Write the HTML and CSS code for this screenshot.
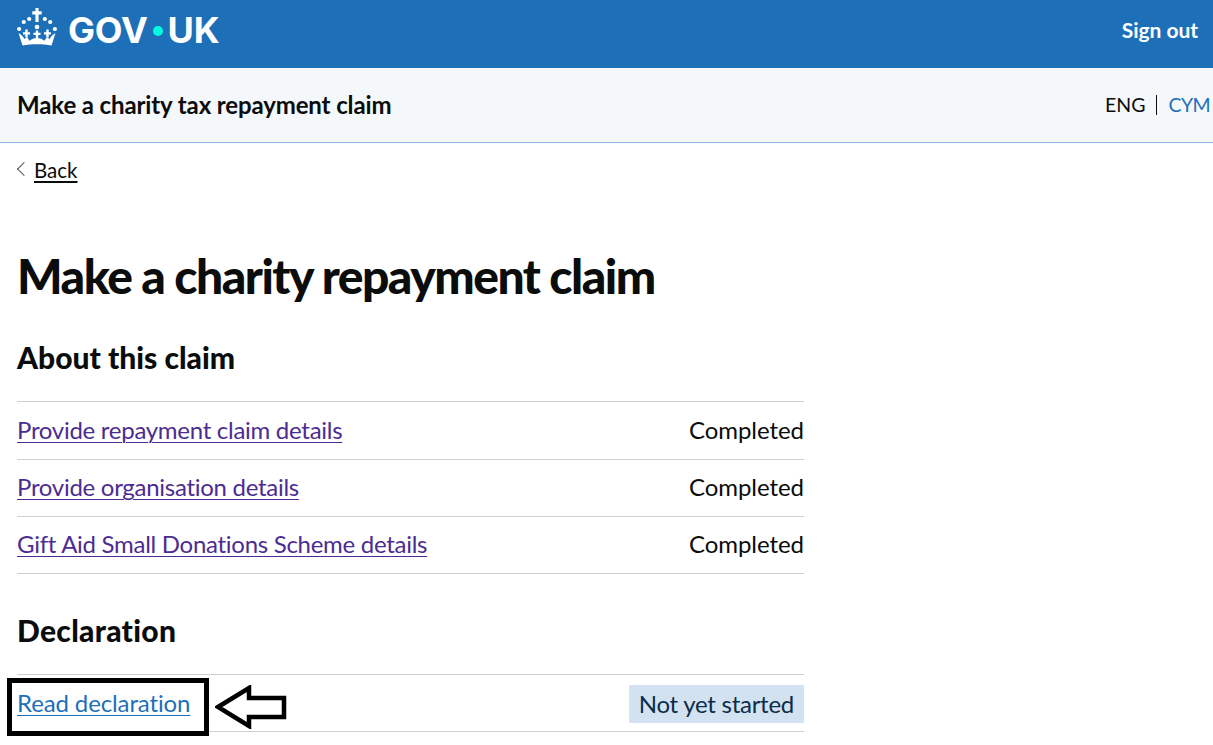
FILE: index.html
```html
<!DOCTYPE html>
<html lang="en">
<head>
<meta charset="utf-8">
<title>Make a charity repayment claim</title>
<link rel="stylesheet" href="styles.css">
</head>
<body>
<header class="top">
  <a class="logo" href="#">
    <svg class="crown" viewBox="0 0 40 38" aria-hidden="true">
      <g fill="#fff">
        <path d="M18.4 0h3.200v3.200h3.100v3.200h-3.100v7.600h-3.200V6.400h-3.100V3.200h3.100z"/>
        <circle cx="20" cy="19" r="2.300"/>
        <circle cx="12.200" cy="11" r="2.100"/><circle cx="27.800" cy="11" r="2.100"/>
        <circle cx="6.800" cy="14" r="2.100"/><circle cx="33.200" cy="14" r="2.100"/>
        <circle cx="2.100" cy="21" r="2.100"/><circle cx="37.900" cy="21" r="2.100"/>
        <path d="M18.800 22.500h2.400v2.200h2.300v2.200h-2.300v3h-2.400v-3h-2.300v-2.200h2.300zM8.300 21.500h2.400v2.700h2.300v2.200h-2.300v3H8.300v-3H6v-2.200h2.300zM29.300 21.500h2.400v2.700H34v2.200h-2.300v3h-2.400v-3H27v-2.200h2.300z"/>
        <path d="M1.500 25c2.500 1.500 4.500 3.300 6 6 .8-.8 1.700-1.300 3-1.500l2 3.300c1.800-1.500 4.500-2.800 7.500-2.800s5.700 1.300 7.500 2.800l2-3.300c1.300.2 2.200.7 3 1.500 1.500-2.700 3.500-4.500 6-6L34.500 37.500c-9-1.700-20-1.700-29 0z"/>
      </g>
    </svg>
    <span class="wordmark">GOV<span class="dot"></span>UK</span>
  </a>
  <a class="signout" href="#">Sign out</a>
</header>
<div class="service">
  <a class="service-name" href="#">Make a charity tax repayment claim</a>
  <nav class="lang"><span class="lang-current">ENG</span><a class="lang-link" href="#">CYM</a></nav>
</div>
<main class="content">
  <a class="back" href="#"><span class="chev"></span><span class="back-text">Back</span></a>
  <h1 class="title">Make a charity repayment claim</h1>
  <h2 class="section first">About this claim</h2>
  <ul class="tasks tasks-done">
    <li class="task task-tall"><a class="task-link visited" href="#">Provide repayment claim details</a><span class="status">Completed</span></li>
    <li class="task"><a class="task-link visited" href="#">Provide organisation details</a><span class="status">Completed</span></li>
    <li class="task"><a class="task-link visited" href="#">Gift Aid Small Donations Scheme details</a><span class="status">Completed</span></li>
  </ul>
  <h2 class="section second">Declaration</h2>
  <ul class="tasks">
    <li class="task"><a class="task-link lift" href="#">Read declaration</a><span class="tag">Not yet started</span></li>
  </ul>
</main>
<div class="mark-box"></div>
<svg class="mark-arrow" viewBox="0 0 72 44" aria-hidden="true">
  <path d="M3 22 L34 3 V13 H69 V32 H34 V41 Z" fill="#fff" stroke="#000" stroke-width="4.500"/>
</svg>
</body>
</html>
```

FILE: styles.css
```css
* { box-sizing: border-box; }
html, body { margin: 0; padding: 0; height: 745px; overflow: hidden; background: #fff; }
body { font-family: "Lato", "Liberation Sans", sans-serif; color: #0b0c0c; position: relative; }
a { color: inherit; }

.top { height: 68px; background: #1d70b8; display: flex; align-items: flex-start; justify-content: space-between; padding: 0 15px 0 17px; color: #fff; }
.logo { display: flex; align-items: flex-start; gap: 11px; text-decoration: none; color: #fff; }
.crown { width: 40px; height: 38px; display: block; margin-top: 8px; }
.wordmark { display: flex; align-items: center; font-family: "Inter", "Liberation Sans", sans-serif; font-weight: 700; font-size: 36px; line-height: 40px; margin-top: 10px; letter-spacing: -0.2px; }
.dot { width: 10px; height: 10px; border-radius: 50%; background: #00ffe0; margin: 2px 5px 0 5px; }
.signout { font-weight: 700; font-size: 21px; line-height: 26px; letter-spacing: -0.05px; text-decoration: none; color: #fff; margin-top: 17px; }

.service { height: 75px; background: #f4f8fb; border-bottom: 1px solid #8fbce6; display: flex; align-items: center; justify-content: space-between; padding: 0 3px 2px 17px; }
.service-name { font-weight: 700; font-size: 24px; letter-spacing: -0.12px; text-decoration: none; color: #0b0c0c; }
.lang { display: flex; align-items: center; font-size: 19.500px; line-height: 20px; margin-top: 2px; }
.lang-current { padding-right: 10px; border-right: 1px solid #0b0c0c; }
.lang-link { padding-left: 12px; color: #1d70b8; letter-spacing: -0.6px; text-decoration: none; }

.content { width: 804px; padding: 0 0 0 17px; }
.back { display: inline-flex; align-items: center; gap: 5px; margin-top: 15px; font-size: 20.500px; line-height: 24px; text-decoration: none; color: #0b0c0c; }
.chev { width: 10px; height: 10px; border-left: 1px solid #505a5f; border-bottom: 1px solid #505a5f; transform: rotate(45deg); margin-left: 2px; margin-top: -2px; }
.back-text { text-decoration: underline; text-underline-offset: 3px; }

.title { font-size: 48px; line-height: 54px; font-weight: 900; letter-spacing: -1.500px; margin: 67px 0 0; }
.section { font-size: 30px; line-height: 36px; font-weight: 900; margin: 38px 0 26px; }
.section.first { margin-top: 36px; margin-bottom: 26px; }
.section.second { letter-spacing: 0.3px; }

.tasks { list-style: none; margin: 0; padding: 0; border-top: 1px solid #cfcfcf; }
.task { height: 57px; display: flex; align-items: center; justify-content: space-between; border-bottom: 1px solid #cfcfcf; font-size: 24px; }
.task-tall { height: 58px; }
.tasks-done .task { padding-bottom: 3px; }
.task-link { color: #1d70b8; letter-spacing: -0.12px; text-underline-offset: 3px; text-decoration-thickness: 1px; }
.task-link.visited { color: #4c2c92; letter-spacing: -0.28px; }
.task-link.lift { margin-bottom: 2px; }
.status { letter-spacing: -0.05px; }
.tag { background: #d2e2f1; color: #0c2d4a; padding: 5px 10px; line-height: 28px; border-radius: 1px; letter-spacing: -0.26px; margin-top: 1px; }

.mark-box { position: absolute; left: 7px; top: 678px; width: 202px; height: 58px; border: 5px solid #000; }
.mark-arrow { position: absolute; left: 215px; top: 685px; width: 72px; height: 44px; }
```
